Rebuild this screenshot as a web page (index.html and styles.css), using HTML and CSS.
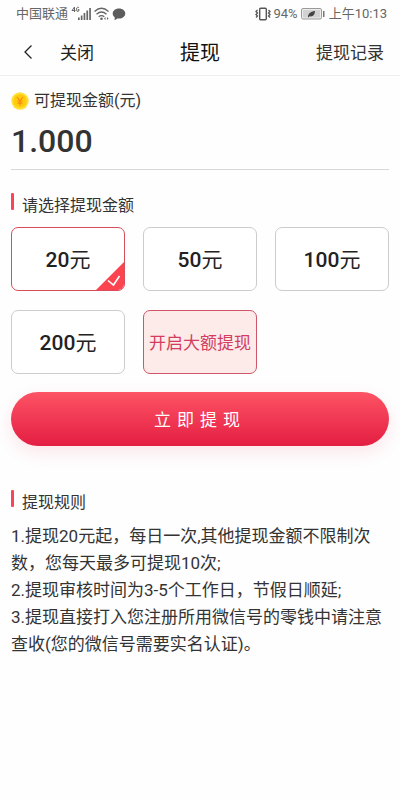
FILE: index.html
```html
<!DOCTYPE html>
<html lang="zh-CN">
<head>
<meta charset="utf-8">
<meta name="viewport" content="width=device-width, initial-scale=1">
<title>提现</title>
<link rel="stylesheet" href="styles.css">
</head>
<body>
<div class="status">
  <span>中国联通</span>
  <svg class="signal" width="54" height="16" viewBox="0 0 54 16" aria-hidden="true">
    <g fill="none" stroke="#666" stroke-width="1">
      <path d="M3.500 6V1L1 4.500H4.500M8 2Q7.500 1 6.500 1.300Q5.500 1.500 5.500 3.500T7 5.500Q8 5.500 8 3.500H6.800"/>
    </g>
    <path fill="#666" d="M7 11.500h1.700V14H7zM9.800 9.500h1.700V14H9.800zM12.600 7h1.700v7h-1.700zM15.400 4.500h1.700V14h-1.700zM18.200 2h1.700v12h-1.700z"/>
    <g fill="none" stroke="#666" stroke-width="1.300">
      <path d="M23.500 5.500Q30.500-1 37.500 5.500M25.500 8.200Q30.500 3.800 35.500 8.200M27.700 10.800Q30.500 8.500 33.300 10.800"/>
    </g>
    <circle cx="30.500" cy="12.800" r="1.300" fill="#666"/>
    <path fill="#666" d="M33 12.500l1.500-1.500v3zM37.500 12.500L36 11v3z"/>
    <path fill="#5c5c5c" d="M48 2.500c3.600 0 6.300 2.200 6.300 5s-2.700 5.100-6.300 5.100l-1.400-.1-3.100 1.800.3-2.900c-1.300-1-2.100-2.300-2.100-3.900 0-2.800 2.700-5 6.300-5z"/>
  </svg>
  <span class="grow"></span>
  <svg width="16" height="14" viewBox="0 0 16 14" aria-hidden="true">
    <rect x="4.700" y="1.200" width="6.600" height="11.600" rx="1" fill="none" stroke="#555" stroke-width="1.400"/>
    <path fill="none" stroke="#555" stroke-width="1.300" d="M2.500 3L1 4.500 2.500 6 1 7.500 2.500 9 1 10.500M13.500 3L15 4.500 13.500 6 15 7.500 13.500 9 15 10.500"/>
  </svg>
  <span>94%</span>
  <svg class="battery" width="24" height="12" viewBox="0 0 24 12" aria-hidden="true">
    <rect x=".5" y=".5" width="20" height="10.500" rx="1.500" fill="#eee" stroke="#999"/>
    <rect x="2" y="2" width="17" height="7.500" fill="#d2d2d2"/>
    <path fill="#444" d="M7 9c0-3.500 2.500-5.500 7-6-.2 4-2 6-5.500 5.300L7.500 9.500z"/>
    <path fill="#777" d="M22 3h1.500v6H22z"/>
  </svg>
  <span>上午10:13</span>
</div>
<header class="nav">
  <div class="nav-left">
    <button class="back" type="button" aria-label="返回">
      <svg width="10" height="16" viewBox="0 0 10 16" aria-hidden="true"><path d="M8.500 1.500L2 8l6.500 6.500" fill="none" stroke="#222" stroke-width="1.300"/></svg>
    </button>
    <button class="close" type="button">关闭</button>
  </div>
  <h1>提现</h1>
  <a class="record" href="#record">提现记录</a>
</header>
<main>
  <section class="balance">
    <p class="caption">
      <svg width="18" height="18" viewBox="0 0 18 18" aria-hidden="true">
        <circle cx="9" cy="9" r="8.700" fill="#ffe03a"/>
        <circle cx="9" cy="9" r="6.800" fill="#ffcb0a"/>
        <path d="M6 5l3 3.800L12 5M9 8.800V13.500M6.500 9h5M6.500 11.200h5" fill="none" stroke="#f78a1d" stroke-width="1.200"/>
      </svg>
      可提现金额(元)
    </p>
    <p class="amount">1.000</p>
  </section>
  <form>
    <h2 id="pick">请选择提现金额</h2>
    <div class="options" role="group" aria-labelledby="pick">
      <label class="option"><input type="radio" name="amount" value="20" checked><span><b>20</b>元</span>
        <svg class="tick" width="28" height="28" viewBox="0 0 28 28" aria-hidden="true"><path d="M28 0v28H0z" fill="#fb4450"/><path d="M12 18.500l5.500 4.500 6-9" fill="none" stroke="#fff" stroke-width="1.600"/></svg>
      </label>
      <label class="option"><input type="radio" name="amount" value="50"><span><b>50</b>元</span></label>
      <label class="option"><input type="radio" name="amount" value="100"><span><b>100</b>元</span></label>
      <label class="option"><input type="radio" name="amount" value="200"><span><b>200</b>元</span></label>
      <button class="option large" type="button">开启大额提现</button>
    </div>
    <button class="submit" type="submit">立即提现</button>
  </form>
  <section class="rules">
    <h2>提现规则</h2>
    <p>1.提现20元起，每日一次,其他提现金额不限制次数，您每天最多可提现10次;</p>
    <p>2.提现审核时间为3-5个工作日，节假日顺延;</p>
    <p>3.提现直接打入您注册所用微信号的零钱中请注意查收(您的微信号需要实名认证)。</p>
  </section>
</main>
</body>
</html>
```
FILE: styles.css
```css
* { box-sizing: border-box; }
body, h1, h2, p { margin: 0; }
body {
  background: #fefefe;
  color: #333;
  font-family: Roboto, "Noto Sans CJK SC", sans-serif;
  font-size: 16px;
}
button {
  margin: 0;
  padding: 0;
  border: 0;
  background: none;
  color: inherit;
  font: inherit;
}
svg { display: block; flex: none; }

.status {
  display: flex;
  align-items: center;
  height: 28px;
  padding: 0 13px 0 16px;
  color: #666;
  font-size: 13px;
  line-height: 20px;
  white-space: nowrap;
}
.signal { margin-left: 3px; overflow: visible; }
.grow { flex: 1; }
.status .battery { margin: 0 2px 0 3px; }
.status svg + span { margin-left: 2px; }

.nav {
  display: grid;
  grid-template-columns: 1fr auto 1fr;
  align-items: center;
  height: 48px;
  padding: 0 16px;
  border-bottom: 1px solid #eee;
  color: #222;
  font-size: 17px;
}
.nav-left { display: flex; gap: 21px; }
.back { display: grid; place-items: center; width: 23px; }
.nav h1 { color: #111; font-size: 20px; font-weight: 400; }
.record { justify-self: end; color: #333; text-decoration: none; }

main { padding: 13px 11px; }
.caption {
  display: flex;
  align-items: center;
  gap: 5px;
  line-height: 24px;
}
.amount {
  padding: 7px 0;
  border-bottom: 1px solid #d8d8d8;
  font-size: 32px;
  font-weight: 500;
  line-height: 42px;
}
h2 {
  display: flex;
  gap: 8px;
  font-size: 16px;
  font-weight: 400;
  line-height: 26px;
}
h2::before {
  content: "";
  width: 3px;
  height: 17px;
  border-radius: 1px;
  background: #fb4458;
}
form h2 { margin-top: 23px; }

.options {
  display: grid;
  grid-template-columns: repeat(3, 1fr);
  gap: 19px 18px;
  margin-top: 8px;
}
.option {
  position: relative;
  display: grid;
  place-items: center;
  height: 64px;
  padding-bottom: 2px;
  overflow: hidden;
  border: 1px solid #ccc;
  border-radius: 7px;
  background: #fff;
  color: #222;
  font-size: 21px;
  white-space: nowrap;
}
.option b { font-weight: 500; }
.option input {
  position: absolute;
  margin: 0;
  opacity: 0;
}
.option:has(:checked) { border-color: #d94c5c; }
.tick { position: absolute; right: 0; bottom: 0; }
.option.large {
  border-color: #cf5666;
  background: #fdebea;
  color: #d33d60;
  font-size: 17px;
}
.submit {
  display: block;
  width: 100%;
  height: 54px;
  margin-top: 18px;
  padding-bottom: 2px;
  border-radius: 27px;
  background: linear-gradient(#fd5364, #e41e43);
  box-shadow: 0 6px 18px #e41e431c;
  color: #fff;
  font-size: 17px;
  letter-spacing: 6px;
}
.rules { margin-top: 44px; }
.rules h2 { margin-bottom: 7px; }
.rules p { font-size: 17px; line-height: 27px; }
```
